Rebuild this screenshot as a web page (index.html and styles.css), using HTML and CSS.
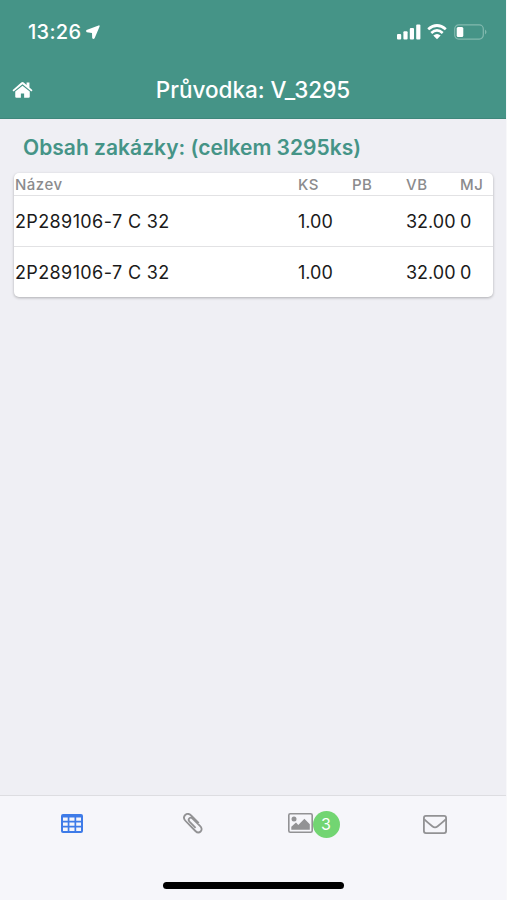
FILE: index.html
```html
<!DOCTYPE html>
<html lang="cs">
<head>
  <meta charset="UTF-8" />
  <meta name="viewport" content="width=device-width, initial-scale=1.0"/>
  <title>Průvodka: V_3295</title>
  <link rel="stylesheet" href="styles.css">
</head>
<body>
  <div class="app">
    <header class="header">
      <div class="status-bar">
        <span class="time">13:26</span>
        <svg class="location" width="14" height="14" viewBox="0 0 14 14"><path d="M12.6 0.4 L0.5 4.9 Q-0.6 6.4 0.8 7.2 L6 8 L6.2 13 Q7.2 14.6 8.6 13.3 L13.6 1.4 Q13.8 0 12.6 0.4 Z"/></svg>
        <div class="status-icons">
          <svg class="signal" width="24" height="16" viewBox="0 0 24 16">
            <rect x="0" y="10" width="4.2" height="5.5" rx="1"/>
            <rect x="6.4" y="7.2" width="4.2" height="8.3" rx="1"/>
            <rect x="12.8" y="4" width="4.2" height="11.5" rx="1"/>
            <rect x="19.2" y="0.5" width="4.2" height="15" rx="1"/>
          </svg>
          <svg class="wifi" width="20" height="16" viewBox="0 0 20 16">
            <path class="arc" d="M1.2 5.3 Q10 -2.3 18.8 5.3"/>
            <path class="arc" d="M4.3 8.9 Q10 4 15.7 8.9"/>
            <path d="M6.3 11.6 Q10 8.5 13.7 11.6 L10 15.3 Z"/>
          </svg>
          <svg class="battery" width="33" height="16" viewBox="0 0 33 16">
            <rect class="battery-case" x="0.7" y="0.9" width="28.6" height="14.2" rx="4"/>
            <rect x="2.7" y="3" width="6.6" height="10" rx="1.5"/>
            <path class="battery-tip" d="M31 5.6 Q34 8 31 10.4 Z"/>
          </svg>
        </div>
      </div>
      <div class="nav-bar">
        <svg class="home" width="21" height="18" viewBox="0 0 22 18">
          <path d="M11 4.5 L3.4 10.6 V16 Q3.4 17.2 4.6 17.2 H9.3 V12.6 H12.7 V17.2 H17.4 Q18.6 17.2 18.6 16 V10.6 Z"/>
          <path d="M0.5 9.2 L9.7 1.2 Q11 0.2 12.3 1.2 L15.3 3.8 V1.2 H18.3 V6.4 L21.5 9.2 L20.3 10.5 L11 2.9 L1.7 10.5 Z"/>
        </svg>
        <h1>Průvodka: V_3295</h1>
      </div>
    </header>

    <main class="content">
      <h2>Obsah zakázky: (celkem 3295ks)</h2>
      <div class="card">
        <div class="row row-head">
          <span>Název</span><span>KS</span><span>PB</span><span>VB</span><span>MJ</span>
        </div>
        <div class="row">
          <span class="name">2P289106-7 C 32</span><span>1.00</span><span></span><span>32.00</span><span>0</span>
        </div>
        <div class="row">
          <span class="name">2P289106-7 C 32</span><span>1.00</span><span></span><span>32.00</span><span>0</span>
        </div>
      </div>
    </main>

    <footer class="tabs">
      <nav class="tab-bar">
        <a class="tab active">
          <svg width="22" height="19" viewBox="0 0 22 19">
            <path fill-rule="evenodd" d="M2 0 H20 Q22 0 22 2 V17 Q22 19 20 19 H2 Q0 19 0 17 V2 Q0 0 2 0 Z M2 3.6 V6.7 H6.7 V3.6 Z M8.4 3.6 V6.7 H13.5 V3.6 Z M15.2 3.6 V6.7 H20 V3.6 Z M2 8.5 V11.8 H6.7 V8.5 Z M8.4 8.5 V11.8 H13.5 V8.5 Z M15.2 8.5 V11.8 H20 V8.5 Z M2 13.5 V17 H6.7 V13.5 Z M8.4 13.5 V17 H13.5 V13.5 Z M15.2 13.5 V17 H20 V13.5 Z"/>
          </svg>
        </a>
        <a class="tab">
          <svg class="line" width="20" height="21" viewBox="0 0 20 21">
            <path d="M15.8 10.2 L8.6 2.8 C6.4 0.6 3.8 0.5 2.2 2 C0.6 3.6 0.7 6 2.6 8 L12.4 18 C14 19.6 16.1 20 17.6 18.5 C19.2 17 18.8 14.8 17.2 13.2 L9.6 5.6 C8.6 4.6 7.2 4.5 6.3 5.3 C5.4 6.2 5.5 7.5 6.5 8.6 L12.6 14.8"/>
          </svg>
        </a>
        <a class="tab">
          <svg class="picture" width="25" height="20" viewBox="0 0 25 20">
            <rect class="frame" x="0.8" y="0.8" width="23.4" height="18.4" rx="1.5"/>
            <circle cx="6" cy="6" r="2.5"/>
            <path d="M3.3 16.8 V13.7 L8 9.5 L10.3 11.9 L16.4 5.7 L21.8 11.2 V16.8 Z"/>
          </svg>
          <span class="badge">3</span>
        </a>
        <a class="tab">
          <svg class="line envelope" width="24" height="19" viewBox="0 0 24 19">
            <rect x="0.9" y="0.9" width="22.2" height="17.2" rx="2"/>
            <path d="M1 4.2 Q4.5 7.5 9.3 11.2 Q12 13.5 14.7 11.2 Q19.5 7.5 23 4.2"/>
          </svg>
        </a>
      </nav>
      <div class="home-indicator"></div>
    </footer>
  </div>
</body>
</html>
```

FILE: styles.css
```css
* {
  box-sizing: border-box;
}

body {
  margin: 0;
  background-color: #efeff4;
  font-family: Inter, "Liberation Sans", sans-serif;
}

svg {
  display: block;
  fill: currentColor;
  flex-shrink: 0;
}

.app {
  display: flex;
  flex-direction: column;
  height: 100vh;
  border-right: 1px solid #f8f8fa;
  overflow: hidden;
}

.header {
  height: 119px;
  background-color: #459487;
  border-bottom: 1px solid #3e877b;
  color: #fff;
}

.status-bar {
  display: flex;
  align-items: center;
  height: 64px;
  padding: 0 19px 0 28px;
}

.time {
  width: 55px;
  margin-right: 3px;
  font-size: 20px;
  font-weight: 550;
  letter-spacing: 0.3px;
}

.status-icons {
  display: flex;
  gap: 7px;
  margin-left: auto;
}

.signal {
  margin-right: -1px;
}

.wifi .arc {
  fill: none;
  stroke: #fff;
  stroke-width: 2.7;
}

.battery-case {
  fill: none;
  stroke: #82b9af;
  stroke-width: 1.2;
}

.battery-tip {
  fill: #82b9af;
}

.nav-bar {
  display: grid;
  grid-template-columns: 1fr auto 1fr;
  align-items: center;
  height: 52px;
  padding: 0 12px;
}

h1 {
  margin: 0;
  font-size: 22.5px;
  line-height: 28px;
  font-weight: 550;
  white-space: nowrap;
}

.content {
  flex: 1;
  padding: 15px 13px 0 14px;
}

h2 {
  margin: 0 0 11px 9px;
  color: #459487;
  font-size: 21px;
  line-height: 28px;
  font-weight: 600;
  letter-spacing: 0.02px;
  white-space: nowrap;
}

.card {
  background-color: #fff;
  border-radius: 5px;
  box-shadow: 0 1px 3px rgba(0, 0, 0, 0.28);
  overflow: hidden;
}

.row {
  display: grid;
  grid-template-columns: 283px 54px 54px 54px 1fr;
  align-items: center;
  height: 51px;
  padding-left: 1px;
  border-bottom: 1px solid #e2e2e4;
  color: #1a1a1a;
  font-size: 18px;
  white-space: nowrap;
}

.row:last-child {
  height: 50px;
  padding-top: 1px;
  border-bottom: none;
}

.name {
  letter-spacing: 0.38px;
}

.row-head {
  height: 23px;
  padding-top: 1px;
  color: #8b8b8d;
  font-size: 15px;
  font-weight: 500;
  letter-spacing: 0.5px;
}

.tabs {
  height: 105px;
  background-color: #f6f6fa;
  border-top: 1px solid #dddde1;
}

.tab-bar {
  display: flex;
  height: 55px;
  padding: 0 11px;
}

.tab {
  display: flex;
  flex: 1;
  align-items: center;
  justify-content: center;
  color: #929294;
}

.tab.active {
  color: #3e7be8;
}

.line {
  fill: none;
  stroke: currentColor;
  stroke-width: 1.8;
}

.frame {
  fill: none;
  stroke: currentColor;
  stroke-width: 1.6;
}

.picture {
  margin-bottom: 1px;
}

.envelope {
  margin-top: 2px;
}

.badge {
  width: 27px;
  height: 27px;
  margin-top: 2px;
  border-radius: 50%;
  background-color: #72d572;
  color: #fff;
  font-size: 16px;
  line-height: 27px;
  text-align: center;
}

.home-indicator {
  width: 181px;
  height: 7px;
  margin: 31px auto 0;
  border-radius: 4px;
  background-color: #000;
}
```
